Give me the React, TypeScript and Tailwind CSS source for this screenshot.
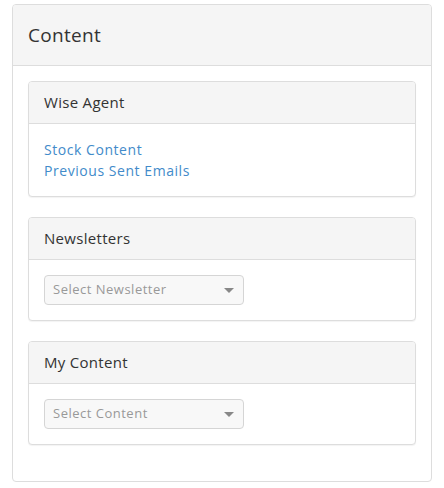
const font = { fontFamily: '"Open Sans", "Liberation Sans", sans-serif' }

function Select({ placeholder }: { placeholder: string }) {
  return (
    <div className="flex h-[30px] w-[200px] items-center justify-between rounded-[4px] border border-[#d5d5d5] bg-[#f8f8f8] pl-[8px] pr-[9px] text-[13px] tracking-[0.5px] text-[#999]">
      <span>{placeholder}</span>
      <span className="h-0 w-0 border-x-[5px] border-t-[5px] border-x-transparent border-t-[#888]" />
    </div>
  )
}

function SubPanel({ title, children }: { title: string; children: React.ReactNode }) {
  return (
    <div className="rounded-[4px] border border-[#ddd] bg-white shadow-[0_1px_1px_rgba(0,0,0,0.05)]">
      <div className="flex h-[42px] items-center rounded-t-[3px] border-b border-[#ddd] bg-[#f5f5f5] px-[15px] text-[15px] tracking-[0.3px] text-[#333]">
        {title}
      </div>
      <div className="p-[15px]">{children}</div>
    </div>
  )
}

export default function App() {
  return (
    <div className="min-h-[488px] bg-white pt-[4px] pl-[12px]" style={font}>
      <div className="w-[420px] rounded-[4px] border border-[#ddd] bg-white">
        <div className="flex h-[61px] items-center rounded-t-[3px] border-b border-[#ddd] bg-[#f5f5f5] px-[15px] text-[19px] tracking-[0.3px] text-[#333]">
          Content
        </div>
        <div className="flex flex-col gap-[20px] px-[15px] pt-[15px] pb-[36px]">
          <SubPanel title="Wise Agent">
            <div className="flex flex-col text-[14px] leading-[21px] tracking-[0.55px] text-[#428bca]">
              <a href="#">Stock Content</a>
              <a href="#">Previous Sent Emails</a>
            </div>
          </SubPanel>
          <SubPanel title="Newsletters">
            <Select placeholder="Select Newsletter" />
          </SubPanel>
          <SubPanel title="My Content">
            <Select placeholder="Select Content" />
          </SubPanel>
        </div>
      </div>
    </div>
  )
}
